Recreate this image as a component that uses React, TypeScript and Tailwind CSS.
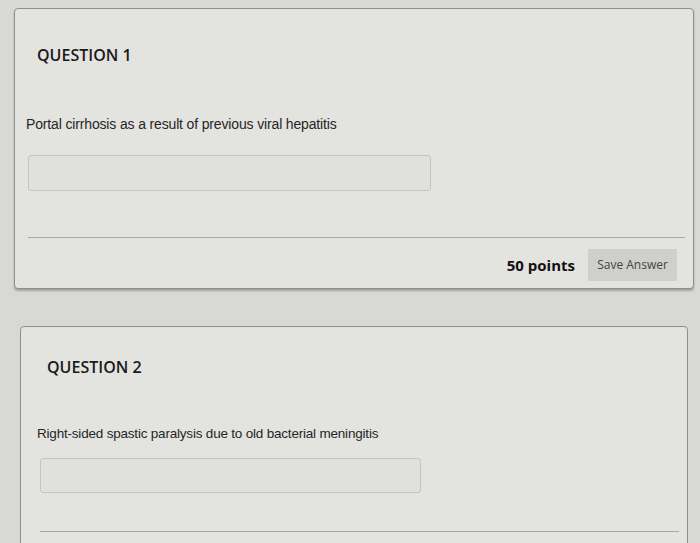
export default function App() {
  return (
    <div className="relative w-[700px] h-[543px] overflow-hidden bg-[#d8d8d5] pt-[8px]">
      {/* Question 1 card */}
      <div className="ml-[14px] w-[680px] h-[281px] rounded-[4px] border border-[#8f8f8d] bg-[#e3e3e0] shadow-[0_2px_2px_rgba(0,0,0,0.25)] flex flex-col">
        <h2 className="ml-[22px] mt-[35px] text-[16px] font-semibold leading-[22px] text-[#1a1a1a] font-['Open_Sans',sans-serif]">
          QUESTION 1
        </h2>
        <p className="ml-[11px] mt-[49px] text-[14px] leading-[18px] tracking-[-0.15px] text-[#262626] font-['Liberation_Sans',Arial,sans-serif]">
          Portal cirrhosis as a result of previous viral hepatitis
        </p>
        <div className="ml-[13px] mt-[22px] w-[403px] h-[36px] rounded-[3px] border border-[#c4c4c1] bg-[#e0e0dd]" />
        <div className="ml-[13px] mr-[8px] mt-[46px] border-t border-[#a8a8a5]" />
        <div className="mt-[11px] mr-[16px] flex items-center justify-end gap-[13px]">
          <span className="text-[15px] font-bold text-[#111] font-['Open_Sans',sans-serif]">50 points</span>
          <button className="w-[89px] h-[32px] bg-[#cfcfcc] text-[12px] text-[#444] font-['Open_Sans',sans-serif]">
            Save Answer
          </button>
        </div>
      </div>

      {/* Question 2 card */}
      <div className="ml-[20px] mt-[37px] w-[668px] h-[260px] rounded-[4px] border border-[#8f8f8d] bg-[#e3e3e0] flex flex-col">
        <h2 className="ml-[26px] mt-[29px] text-[16px] font-semibold leading-[22px] text-[#1a1a1a] font-['Open_Sans',sans-serif]">
          QUESTION 2
        </h2>
        <p className="ml-[16px] mt-[47px] text-[13.5px] leading-[18px] tracking-[-0.2px] text-[#262626] font-['Liberation_Sans',Arial,sans-serif]">
          Right-sided spastic paralysis due to old bacterial meningitis
        </p>
        <div className="ml-[19px] mt-[15px] w-[381px] h-[35px] rounded-[3px] border border-[#c4c4c1] bg-[#e0e0dd]" />
        <div className="ml-[19px] mr-[8px] mt-[38px] border-t border-[#a8a8a5]" />
      </div>
    </div>
  );
}
